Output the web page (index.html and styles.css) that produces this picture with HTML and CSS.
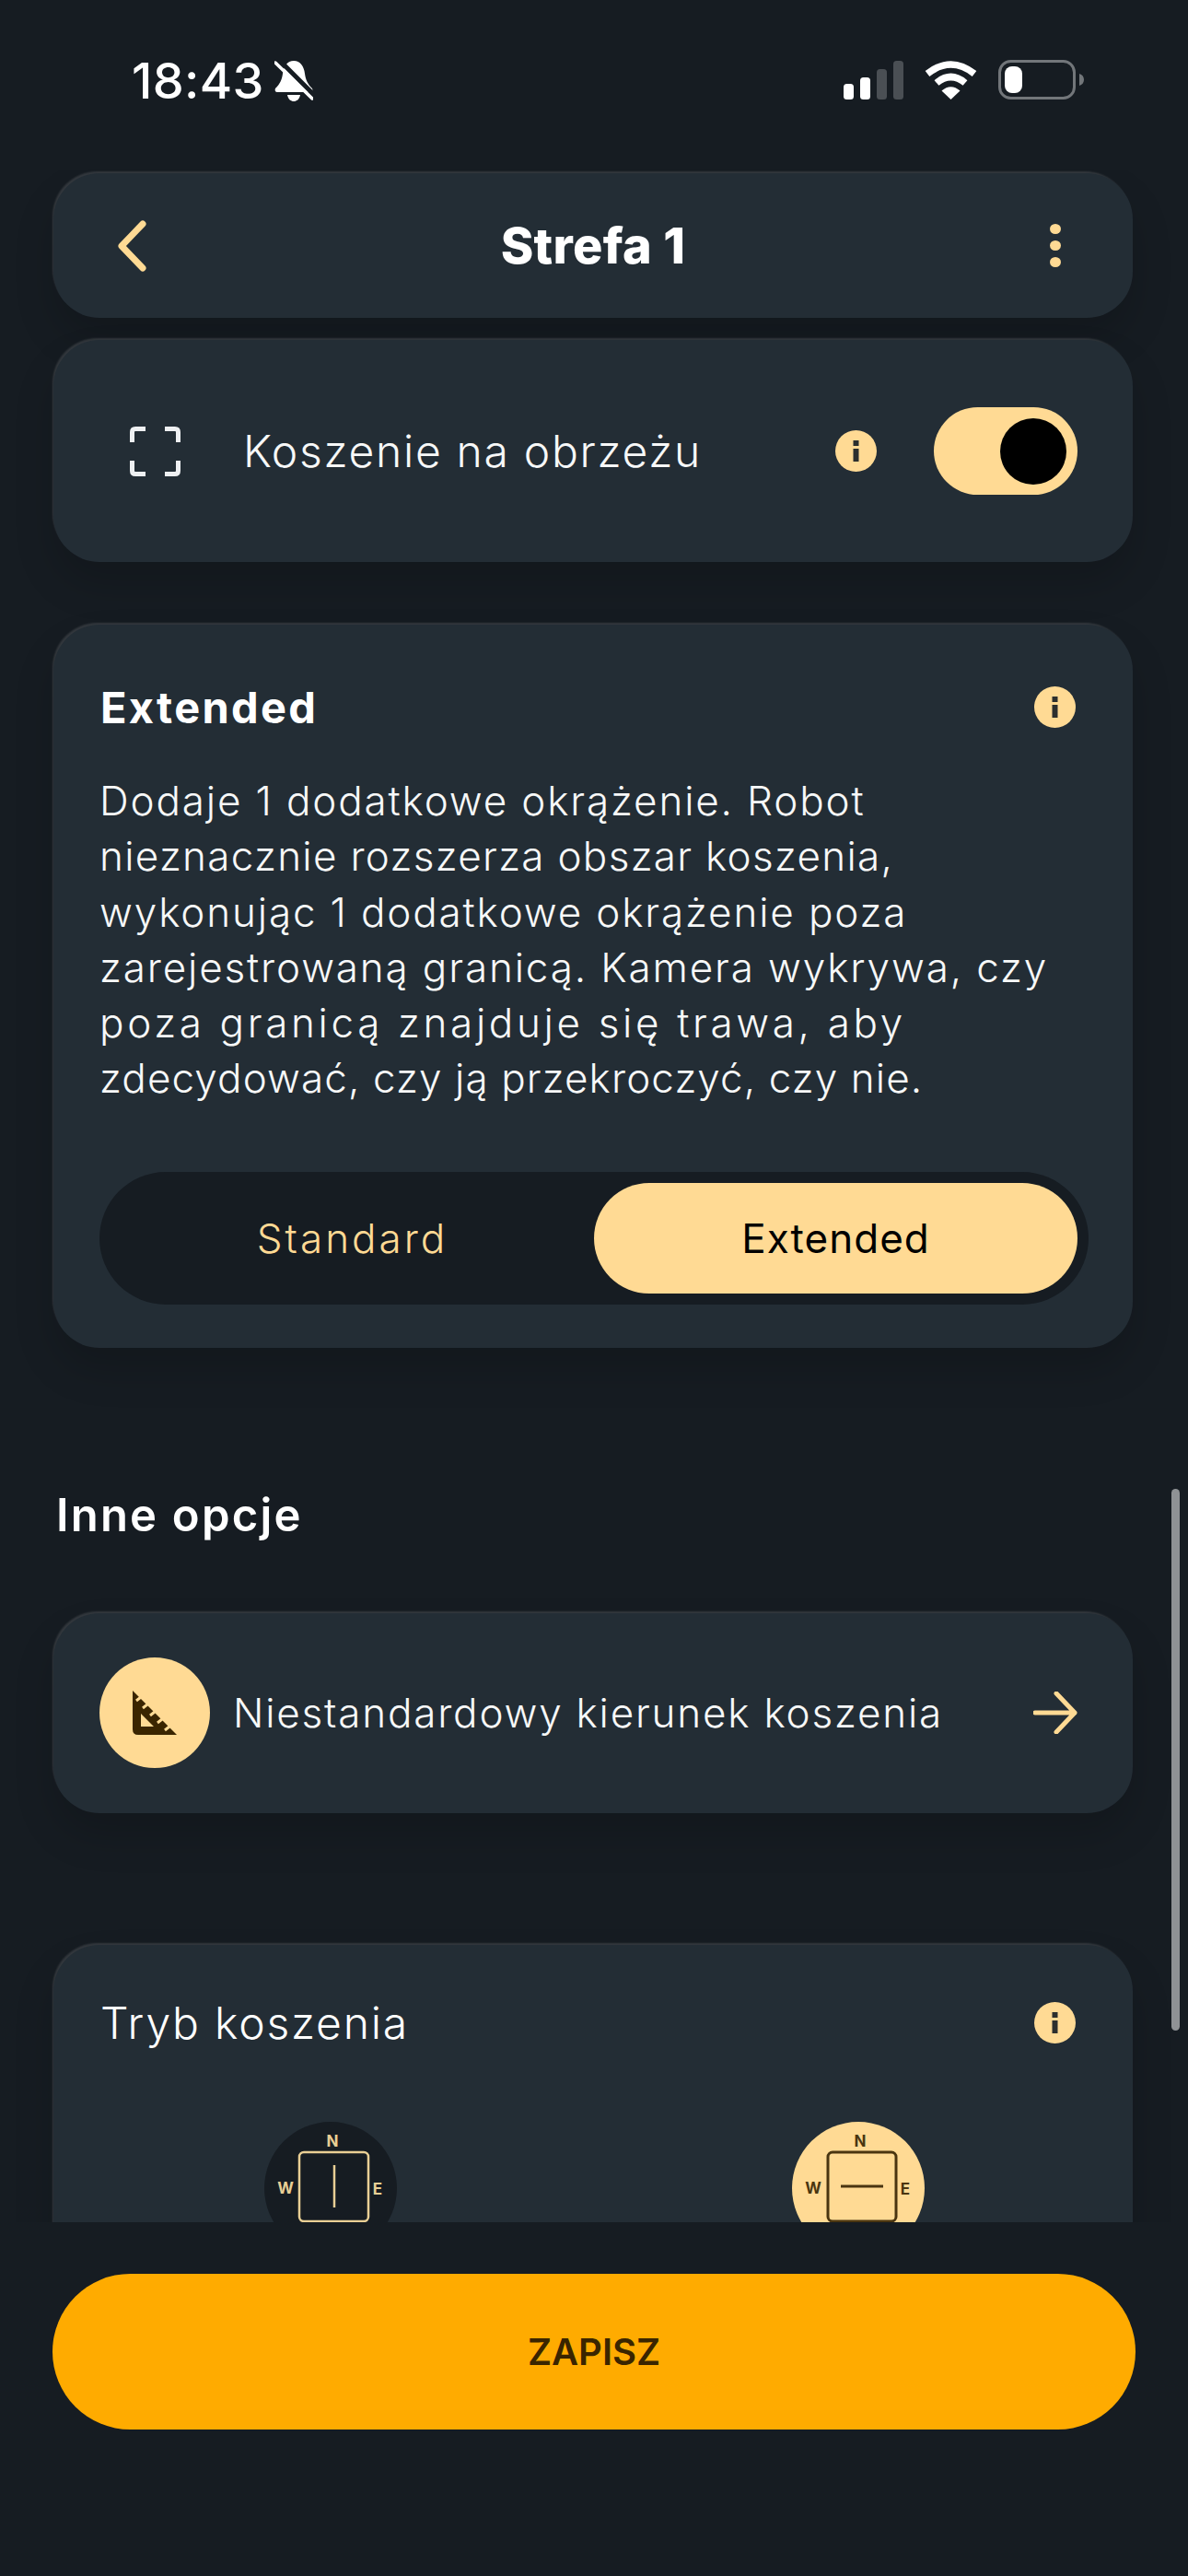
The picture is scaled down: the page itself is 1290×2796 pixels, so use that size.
FILE: index.html
```html
<!DOCTYPE html>
<html lang="pl">
<head>
    <meta charset="UTF-8">
    <meta name="viewport" content="width=device-width, initial-scale=1.0">
    <title>Strefa 1</title>
    <link rel="stylesheet" href="styles.css">
</head>
<body>

<svg class="defs" width="0" height="0">
    <symbol id="info" viewBox="0 0 45 45">
        <circle cx="22.5" cy="22.5" r="22.5" fill="#ffda94"/>
        <rect x="19.5" y="11" width="6" height="6" fill="#2c2f2e"/>
        <rect x="19.5" y="20" width="6" height="14" fill="#2c2f2e"/>
    </symbol>
</svg>

<div class="screen">
    <div class="status">
        <div class="status-left">
            <span class="time">18:43</span>
            <svg class="bell" viewBox="0 0 42 45" width="42" height="45">
                <path d="M21 1C14 1 10 7 9 15C8 22 6 26 1 31C0 33 1 35 3 35H39C41 35 42 33 41 31C36 26 34 22 33 15C32 7 28 1 21 1Z" fill="#fff"/>
                <path d="M14 38H28C27 43 24 45 21 45C18 45 15 43 14 38Z" fill="#fff"/>
                <path d="M4 -1L44 39" stroke="#161c22" stroke-width="5"/>
                <path d="M1 3L41 42" stroke="#fff" stroke-width="3.5" stroke-linecap="round"/>
            </svg>
        </div>
        <div class="status-right">
            <svg class="signal" viewBox="0 0 65 42" width="65" height="42">
                <rect x="0" y="25" width="11" height="17" rx="3.5" fill="#fff"/>
                <rect x="18" y="18" width="11" height="24" rx="3.5" fill="#fff"/>
                <rect x="36" y="9" width="11" height="33" rx="3.5" fill="#4a4f54"/>
                <rect x="54" y="0" width="11" height="42" rx="3.5" fill="#4a4f54"/>
            </svg>
            <svg class="wifi" viewBox="0 0 57 42" width="57" height="42">
                <path d="M3 14Q28.5 -6 54 14" fill="none" stroke="#fff" stroke-width="7.5"/>
                <path d="M13 24Q28.5 11 44 24" fill="none" stroke="#fff" stroke-width="7.5"/>
                <path d="M28.5 42L18.500 32.500Q28.500 24 38.500 32.500Z" fill="#fff"/>
            </svg>
            <svg class="battery" viewBox="0 0 93 43" width="93" height="43">
                <rect x="1.500" y="1.500" width="81" height="40" rx="12" fill="none" stroke="#72767a" stroke-width="3"/>
                <rect x="7" y="7" width="19" height="29" rx="8" fill="#fff"/>
                <path d="M88 15C91 16 93 18 93 21.500C93 25 91 27 88 28Z" fill="#72767a"/>
            </svg>
        </div>
    </div>

    <div class="scroll">
        <div class="card topbar">
            <svg class="back" viewBox="0 0 31 56" width="31" height="56">
                <path d="M27 4L4 28L27 52" fill="none" stroke="#ffda94" stroke-width="7" stroke-linecap="round" stroke-linejoin="round"/>
            </svg>
            <h1 class="title">Strefa 1</h1>
            <div class="dots"><i></i><i></i><i></i></div>
        </div>

        <div class="card edge-row">
            <svg class="frame" viewBox="0 0 55 54" width="55" height="54">
                <path d="M2.500 17V6Q2.500 2.500 6 2.500H17M38 2.500H49Q52.500 2.500 52.500 6V17M2.500 37V48Q2.500 51.500 6 51.500H17M38 51.500H49Q52.500 51.500 52.500 48V37" fill="none" stroke="#eef0f2" stroke-width="5"/>
            </svg>
            <span class="edge-label">Koszenie na obrzeżu</span>
            <svg class="info info-row"><use href="#info"/></svg>
            <div class="toggle"><span class="knob"></span></div>
        </div>

        <div class="card extended">
            <div class="card-head">
                <h2 class="card-title">Extended</h2>
                <svg class="info"><use href="#info"/></svg>
            </div>
            <p class="desc">
                <span>Dodaje 1 dodatkowe okrążenie. Robot</span>
                <span class="tight">nieznacznie rozszerza obszar koszenia,</span>
                <span>wykonując 1 dodatkowe okrążenie poza</span>
                <span>zarejestrowaną granicą. Kamera wykrywa, czy</span>
                <span class="wide">poza granicą znajduje się trawa, aby</span>
                <span class="tighter">zdecydować, czy ją przekroczyć, czy nie.</span>
            </p>
            <div class="segment">
                <span class="seg-item">Standard</span>
                <span class="seg-item seg-active">Extended</span>
            </div>
        </div>

        <h2 class="section-title">Inne opcje</h2>

        <div class="card link-row">
            <span class="round-icon">
                <svg viewBox="0 0 48 48" width="48" height="48">
                    <path fill-rule="evenodd" d="M0 0L48 48H6Q0 48 0 42ZM9 25V39H23Z" fill="#3a2500"/>
                    <path d="M4 11L9 7M11 19L16 15M19 27L24 23M27 35L32 31M35 43L40 39" stroke="#ffda94" stroke-width="3"/>
                </svg>
            </span>
            <span class="link-label">Niestandardowy kierunek koszenia</span>
            <svg class="arrow" viewBox="0 0 48 46" width="48" height="46">
                <path d="M2 23H45M25 2L45 23L25 44" fill="none" stroke="#ffda94" stroke-width="5" stroke-linecap="round" stroke-linejoin="round"/>
            </svg>
        </div>

        <div class="card mode">
            <div class="card-head">
                <h2 class="card-title plain">Tryb koszenia</h2>
                <svg class="info"><use href="#info"/></svg>
            </div>
            <div class="mode-grid">
                <svg class="compass" viewBox="0 0 144 144" width="144" height="144">
                    <circle cx="72" cy="72" r="72" fill="#161c22"/>
                    <rect x="38" y="33" width="75" height="75" rx="5" fill="none" stroke="#e9cf95" stroke-width="2.500"/>
                    <path d="M76 47V93" stroke="#e9cf95" stroke-width="2.500"/>
                    <g class="compass-text" fill="#e9cf95">
                        <text x="74" y="27">N</text>
                        <text x="23" y="78">W</text>
                        <text x="123" y="79">E</text>
                    </g>
                </svg>
                <svg class="compass" viewBox="0 0 144 144" width="144" height="144">
                    <circle cx="72" cy="72" r="72" fill="#ffda94"/>
                    <rect x="39" y="33" width="74" height="75" rx="5" fill="none" stroke="#4a3510" stroke-width="3"/>
                    <path d="M53 70H99" stroke="#4a3510" stroke-width="3"/>
                    <g class="compass-text" fill="#4a3510">
                        <text x="74" y="27">N</text>
                        <text x="23" y="78">W</text>
                        <text x="123" y="79">E</text>
                    </g>
                </svg>
            </div>
        </div>
    </div>

    <div class="footer">
        <button class="save">ZAPISZ</button>
    </div>

    <div class="scrollbar"></div>
</div>

</body>
</html>
```

FILE: styles.css
```css
* {
    box-sizing: border-box;
}

body {
    margin: 0;
    background-color: #161c22;
    font-family: Inter, "Open Sans", sans-serif;
    color: #f7f8f8;
}

.defs {
    display: block;
    height: 0;
}

.screen {
    position: relative;
    width: 1290px;
    height: 2796px;
    display: flex;
    flex-direction: column;
    overflow: hidden;
}

.status {
    height: 188px;
    flex: none;
    padding: 65px 113px 0 143px;
    display: flex;
    justify-content: space-between;
    align-items: flex-start;
}

.status-left {
    display: flex;
    align-items: flex-start;
    gap: 11px;
}

.time {
    font-size: 54px;
    font-weight: 500;
    line-height: 45px;
    color: #fff;
    letter-spacing: 0.3px;
}

.status-right {
    display: flex;
    align-items: flex-end;
    gap: 23px;
}

.scroll {
    flex: none;
    height: 2228px;
    padding: 4px 60px 0 58px;
    margin-top: -4px;
    overflow: hidden;
}

.card {
    background-color: #232d35;
    border-radius: 50px;
    box-shadow: -2px -3px 2px -1px rgba(255, 255, 255, 0.13), 0 24px 44px rgba(0, 0, 0, 0.16);
}

.topbar {
    height: 157px;
    padding: 0 70px;
    display: grid;
    grid-template-columns: 1fr auto 1fr;
    align-items: center;
}

.title {
    margin: 0;
    font-size: 54px;
    font-weight: 800;
    color: #fff;
    letter-spacing: 0.3px;
}

.dots {
    justify-self: end;
    margin-right: 8px;
    display: flex;
    flex-direction: column;
    gap: 7px;
}

.dots i {
    display: block;
    width: 12px;
    height: 11px;
    border-radius: 50%;
    background-color: #ffda94;
}

.edge-row {
    height: 241px;
    margin-top: 24px;
    padding: 0 60px 0 83px;
    display: flex;
    align-items: center;
}

.edge-label {
    margin-left: 68px;
    font-size: 48px;
    font-weight: 300;
    letter-spacing: 1.7px;
    white-space: nowrap;
}

.info {
    display: block;
    width: 45px;
    height: 45px;
    flex: none;
}

.info-row {
    margin-left: auto;
}

.toggle {
    width: 156px;
    height: 95px;
    margin-left: 62px;
    padding: 12px;
    border-radius: 48px;
    background-color: #ffda94;
    display: flex;
    justify-content: flex-end;
}

.knob {
    width: 72px;
    height: 72px;
    border-radius: 50%;
    background-color: #000;
}

.extended {
    margin-top: 68px;
    padding: 59px 48px 47px 50px;
}

.card-head {
    display: flex;
    justify-content: space-between;
    align-items: center;
    padding: 0 14px 0 1px;
    height: 60px;
}

.card-title {
    margin: 0;
    font-size: 47px;
    font-weight: 700;
    letter-spacing: 2.3px;
    color: #fff;
}

.card-title.plain {
    font-size: 48px;
    font-weight: 300;
    letter-spacing: 1.8px;
}

.desc {
    margin: 42px 0 0;
    font-size: 44px;
    font-weight: 300;
    line-height: 60.3px;
    letter-spacing: 1.85px;
    white-space: nowrap;
}

.desc span {
    display: block;
}

.desc .tight {
    letter-spacing: 1.3px;
}

.desc .tighter {
    letter-spacing: 1.1px;
}

.desc .wide {
    letter-spacing: 3.65px;
}

.segment {
    height: 144px;
    margin-top: 71px;
    padding: 12px;
    border-radius: 72px;
    background-color: #161c22;
    display: grid;
    grid-template-columns: 1fr 525px;
}

.seg-item {
    display: flex;
    align-items: center;
    justify-content: center;
    border-radius: 60px;
    font-size: 44px;
    font-weight: 300;
    letter-spacing: 3px;
    color: #ffda94;
}

.seg-active {
    background-color: #ffda94;
    color: #000;
    font-weight: 400;
    letter-spacing: 1px;
}

.section-title {
    margin: 152px 0 76px 3px;
    height: 60px;
    line-height: 60px;
    font-size: 49px;
    font-weight: 600;
    letter-spacing: 2.2px;
    color: #fff;
}

.link-row {
    height: 217px;
    padding: 0 60px 0 50px;
    display: flex;
    align-items: center;
}

.round-icon {
    width: 120px;
    height: 120px;
    flex: none;
    border-radius: 50%;
    background-color: #ffda94;
    display: flex;
    align-items: center;
    justify-content: center;
}

.link-label {
    margin-left: 25px;
    font-size: 44px;
    font-weight: 300;
    letter-spacing: 1.8px;
    white-space: nowrap;
}

.arrow {
    margin-left: auto;
    flex: none;
}

.mode {
    margin-top: 143px;
    height: 500px;
    padding: 55px 48px 0 50px;
}

.mode-grid {
    margin-top: 77px;
    display: grid;
    grid-template-columns: 1fr 1fr;
    gap: 72px;
    justify-items: center;
}

.compass {
    display: block;
}

.compass-text text {
    font-size: 17px;
    font-weight: 700;
    text-anchor: middle;
}

.footer {
    flex: 1;
    padding: 56px 57px 0;
}

.save {
    display: block;
    width: 100%;
    height: 169px;
    border: 0;
    border-radius: 85px;
    background-color: #ffab00;
    font-family: inherit;
    font-size: 40px;
    font-weight: 600;
    color: #3a2500;
}

.scrollbar {
    position: absolute;
    left: 1272px;
    top: 1616px;
    width: 9px;
    height: 588px;
    border-radius: 5px;
    background-color: #8f9295;
}
```
